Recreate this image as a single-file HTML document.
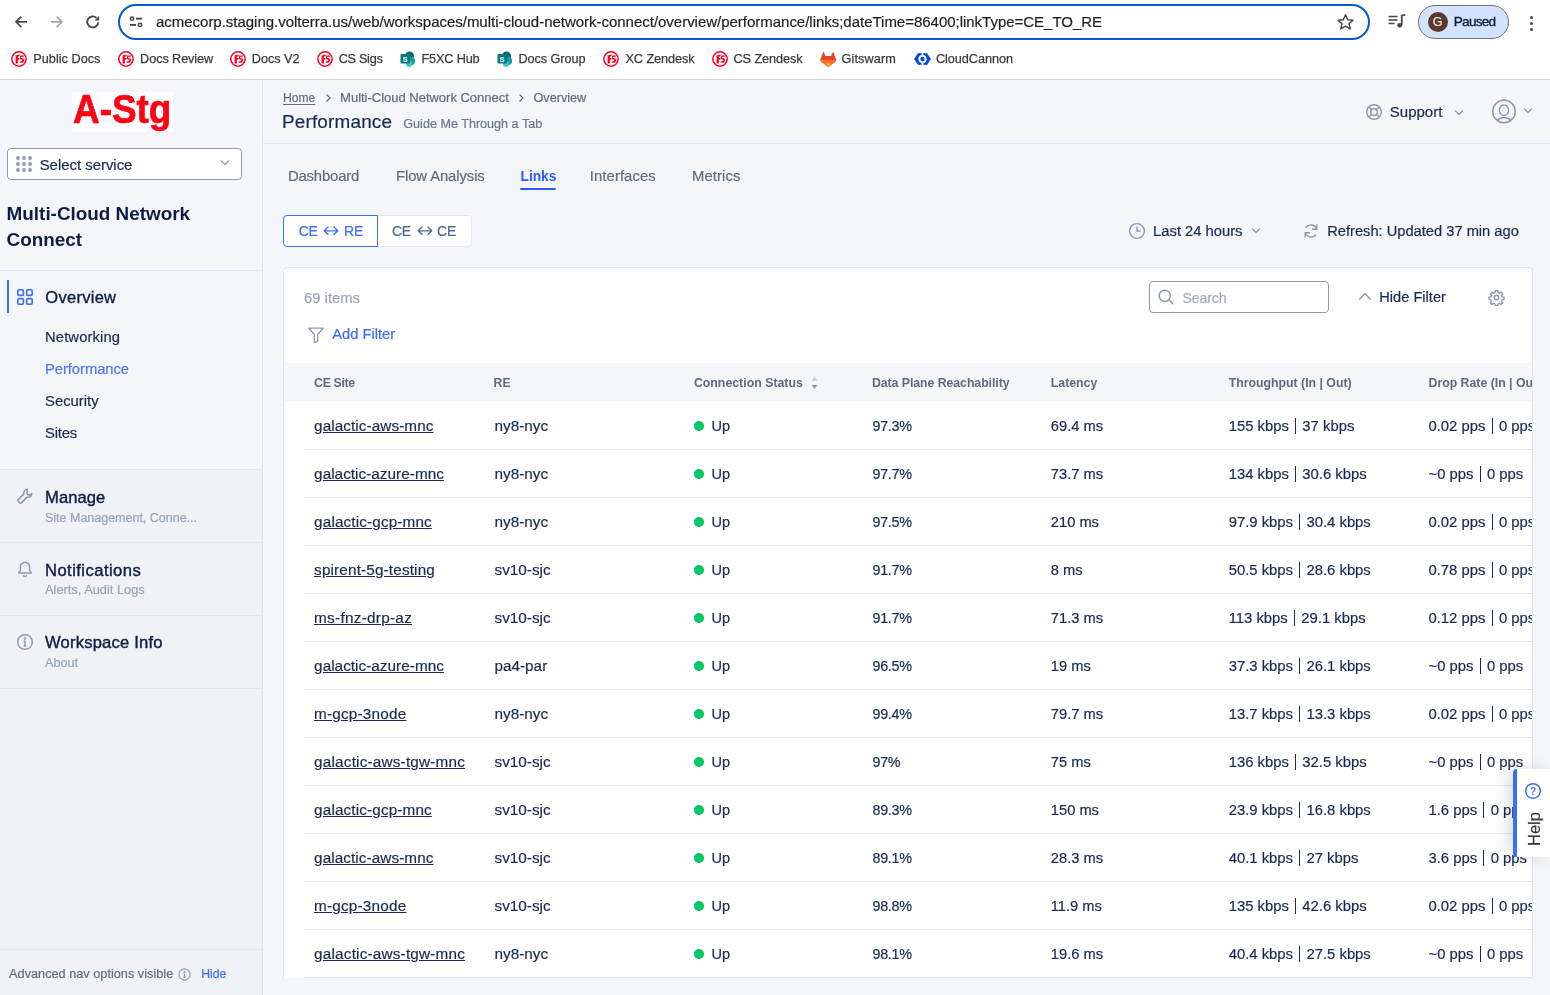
<!DOCTYPE html>
<html><head><meta charset="utf-8"><style>
html,body{margin:0;padding:0;width:1550px;height:995px;overflow:hidden;background:#f5f6f9;font-family:"Liberation Sans",sans-serif;}
body{position:relative;will-change:transform}
div{-webkit-text-stroke:0.2px currentColor}
</style></head><body>
<div style="position:absolute;left:0px;top:0px;width:1550px;height:79px;background:#ffffff"></div>
<div style="position:absolute;left:0px;top:79px;width:1550px;height:1px;background:#d6d9d8"></div>
<div style="position:absolute;left:118px;top:4px;width:1252px;height:36px;box-sizing:border-box;border:2px solid #0b57d0;border-radius:18px;background:#fff"></div>
<div style="position:absolute;left:156.00px;top:12.98px;font-size:15px;line-height:17.25px;white-space:pre;color:#1f1f1f;letter-spacing:-0.021px;">acmecorp.staging.volterra.us/web/workspaces/multi-cloud-network-connect/overview/performance/links;dateTime=86400;linkType=CE_TO_RE</div>
<svg style="position:absolute;left:0;top:0" width="120" height="45" viewBox="0 0 120 45">
<path d="M27 21.8H16.2M21.3 16.6L16 21.8l5.3 5.3" fill="none" stroke="#474747" stroke-width="1.7"/>
<path d="M51 21.8h10.8M56.7 16.6L62 21.8l-5.3 5.3" fill="none" stroke="#a6a6a6" stroke-width="1.7"/>
<path d="M98.2 22.2a5.5 5.5 0 1 1-1.7-4.3" fill="none" stroke="#474747" stroke-width="1.9"/>
<path d="M99.2 15.8v4.6h-4.6z" fill="#474747"/>
</svg>
<svg style="position:absolute;left:126px;top:12px" width="20" height="20" viewBox="0 0 20 20">
<circle cx="6" cy="6.6" r="1.7" fill="none" stroke="#474747" stroke-width="1.5"/><path d="M10 6.6h6.2" stroke="#474747" stroke-width="1.9"/>
<circle cx="14" cy="12.9" r="1.7" fill="none" stroke="#474747" stroke-width="1.5"/><path d="M4 12.9h6" stroke="#474747" stroke-width="1.9"/>
</svg>
<svg style="position:absolute;left:1336px;top:13px" width="19" height="18" viewBox="0 0 19 18">
<path d="M9.5 1.8l2.2 4.9 5.3.5-4 3.5 1.2 5.2-4.7-2.8-4.7 2.8 1.2-5.2-4-3.5 5.3-.5z" fill="none" stroke="#474747" stroke-width="1.5" stroke-linejoin="round"/>
</svg>
<svg style="position:absolute;left:1387px;top:13px" width="20" height="17" viewBox="0 0 20 17">
<path d="M1.5 3.5h9M1.5 7h9M1.5 10.5h6" stroke="#474747" stroke-width="1.6"/>
<path d="M14.8 2.2v9.5" stroke="#474747" stroke-width="1.8"/><path d="M14.8 2.2h3.4" stroke="#474747" stroke-width="1.8"/>
<circle cx="12.7" cy="12.3" r="2.4" fill="#474747"/>
</svg>
<div style="position:absolute;left:1418px;top:5px;width:91px;height:34px;box-sizing:border-box;border:1px solid #6f7378;border-radius:17px;background:#d3e3fd"></div>
<div style="position:absolute;left:1428px;top:12px;width:20px;height:20px;border-radius:50%;background:#5b372c"></div>
<div style="position:absolute;left:1432.80px;top:14.78px;font-size:12.5px;line-height:14.37px;white-space:pre;color:#f2e6e0;">G</div>
<div style="position:absolute;left:1453.80px;top:13.87px;font-size:13.6px;line-height:15.64px;white-space:pre;color:#0a1f3f;letter-spacing:-0.771px;-webkit-text-stroke:0.35px #0a1f3f;">Paused</div>
<div style="position:absolute;left:1529.5px;top:15.5px;width:3.2px;height:3.2px;border-radius:50%;background:#474747"></div>
<div style="position:absolute;left:1529.5px;top:21.5px;width:3.2px;height:3.2px;border-radius:50%;background:#474747"></div>
<div style="position:absolute;left:1529.5px;top:27.5px;width:3.2px;height:3.2px;border-radius:50%;background:#474747"></div>
<div style="position:absolute;left:33.30px;top:52.10px;font-size:12.7px;line-height:14.60px;white-space:pre;color:#3c3c3c;letter-spacing:0.013px;-webkit-text-stroke:0.25px #3c3c3c;">Public Docs</div>
<svg style="position:absolute;left:10.8px;top:51px" width="16" height="16" viewBox="0 0 16 16"><circle cx="8" cy="8" r="7.2" fill="#fff" stroke="#ff0020" stroke-width="1.5"/><path d="M4.6 5.2v7.4h2.3V8.4h1.6V7H6.9V6c0-.6.5-.9 1.1-.8l.5.1.3-1.3c-.4-.2-.9-.3-1.5-.3-1.6 0-2.7.8-2.7 1.5z" fill="#ff0020"/><path d="M9.2 4.4h3.9l-.3 1.4h-2.4l-.2 1.2c1.7-.2 2.9.6 2.9 2.2 0 1.8-1.6 2.9-3.7 2.6L8.6 11.5l.5-1.3c1 .3 2.1 0 2.1-1 0-.8-.9-1.2-2.4-.9z" fill="#ff0020"/></svg>
<div style="position:absolute;left:140.10px;top:52.10px;font-size:12.7px;line-height:14.60px;white-space:pre;color:#3c3c3c;letter-spacing:-0.091px;-webkit-text-stroke:0.25px #3c3c3c;">Docs Review</div>
<svg style="position:absolute;left:118.0px;top:51px" width="16" height="16" viewBox="0 0 16 16"><circle cx="8" cy="8" r="7.2" fill="#fff" stroke="#ff0020" stroke-width="1.5"/><path d="M4.6 5.2v7.4h2.3V8.4h1.6V7H6.9V6c0-.6.5-.9 1.1-.8l.5.1.3-1.3c-.4-.2-.9-.3-1.5-.3-1.6 0-2.7.8-2.7 1.5z" fill="#ff0020"/><path d="M9.2 4.4h3.9l-.3 1.4h-2.4l-.2 1.2c1.7-.2 2.9.6 2.9 2.2 0 1.8-1.6 2.9-3.7 2.6L8.6 11.5l.5-1.3c1 .3 2.1 0 2.1-1 0-.8-.9-1.2-2.4-.9z" fill="#ff0020"/></svg>
<div style="position:absolute;left:251.80px;top:52.10px;font-size:12.7px;line-height:14.60px;white-space:pre;color:#3c3c3c;letter-spacing:-0.042px;-webkit-text-stroke:0.25px #3c3c3c;">Docs V2</div>
<svg style="position:absolute;left:229.8px;top:51px" width="16" height="16" viewBox="0 0 16 16"><circle cx="8" cy="8" r="7.2" fill="#fff" stroke="#ff0020" stroke-width="1.5"/><path d="M4.6 5.2v7.4h2.3V8.4h1.6V7H6.9V6c0-.6.5-.9 1.1-.8l.5.1.3-1.3c-.4-.2-.9-.3-1.5-.3-1.6 0-2.7.8-2.7 1.5z" fill="#ff0020"/><path d="M9.2 4.4h3.9l-.3 1.4h-2.4l-.2 1.2c1.7-.2 2.9.6 2.9 2.2 0 1.8-1.6 2.9-3.7 2.6L8.6 11.5l.5-1.3c1 .3 2.1 0 2.1-1 0-.8-.9-1.2-2.4-.9z" fill="#ff0020"/></svg>
<div style="position:absolute;left:338.70px;top:52.10px;font-size:12.7px;line-height:14.60px;white-space:pre;color:#3c3c3c;letter-spacing:-0.297px;-webkit-text-stroke:0.25px #3c3c3c;">CS Sigs</div>
<svg style="position:absolute;left:316.8px;top:51px" width="16" height="16" viewBox="0 0 16 16"><circle cx="8" cy="8" r="7.2" fill="#fff" stroke="#ff0020" stroke-width="1.5"/><path d="M4.6 5.2v7.4h2.3V8.4h1.6V7H6.9V6c0-.6.5-.9 1.1-.8l.5.1.3-1.3c-.4-.2-.9-.3-1.5-.3-1.6 0-2.7.8-2.7 1.5z" fill="#ff0020"/><path d="M9.2 4.4h3.9l-.3 1.4h-2.4l-.2 1.2c1.7-.2 2.9.6 2.9 2.2 0 1.8-1.6 2.9-3.7 2.6L8.6 11.5l.5-1.3c1 .3 2.1 0 2.1-1 0-.8-.9-1.2-2.4-.9z" fill="#ff0020"/></svg>
<div style="position:absolute;left:421.50px;top:52.10px;font-size:12.7px;line-height:14.60px;white-space:pre;color:#3c3c3c;letter-spacing:-0.161px;-webkit-text-stroke:0.25px #3c3c3c;">F5XC Hub</div>
<svg style="position:absolute;left:400.0px;top:51px" width="16" height="16" viewBox="0 0 16 16"><circle cx="9.5" cy="5" r="4.5" fill="#036c70"/><circle cx="11" cy="10" r="4.2" fill="#1a9ba1"/><circle cx="9" cy="13" r="3" fill="#37c6d0"/><rect x="0.5" y="3" width="9.5" height="9.5" rx="1" fill="#03787c"/><text x="5.2" y="10.8" text-anchor="middle" font-family="Liberation Sans" font-weight="bold" font-size="8" fill="#fff">S</text></svg>
<div style="position:absolute;left:518.50px;top:52.10px;font-size:12.7px;line-height:14.60px;white-space:pre;color:#3c3c3c;letter-spacing:-0.076px;-webkit-text-stroke:0.25px #3c3c3c;">Docs Group</div>
<svg style="position:absolute;left:496.6px;top:51px" width="16" height="16" viewBox="0 0 16 16"><circle cx="9.5" cy="5" r="4.5" fill="#036c70"/><circle cx="11" cy="10" r="4.2" fill="#1a9ba1"/><circle cx="9" cy="13" r="3" fill="#37c6d0"/><rect x="0.5" y="3" width="9.5" height="9.5" rx="1" fill="#03787c"/><text x="5.2" y="10.8" text-anchor="middle" font-family="Liberation Sans" font-weight="bold" font-size="8" fill="#fff">S</text></svg>
<div style="position:absolute;left:625.50px;top:52.10px;font-size:12.7px;line-height:14.60px;white-space:pre;color:#3c3c3c;letter-spacing:-0.088px;-webkit-text-stroke:0.25px #3c3c3c;">XC Zendesk</div>
<svg style="position:absolute;left:603.4px;top:51px" width="16" height="16" viewBox="0 0 16 16"><circle cx="8" cy="8" r="7.2" fill="#fff" stroke="#ff0020" stroke-width="1.5"/><path d="M4.6 5.2v7.4h2.3V8.4h1.6V7H6.9V6c0-.6.5-.9 1.1-.8l.5.1.3-1.3c-.4-.2-.9-.3-1.5-.3-1.6 0-2.7.8-2.7 1.5z" fill="#ff0020"/><path d="M9.2 4.4h3.9l-.3 1.4h-2.4l-.2 1.2c1.7-.2 2.9.6 2.9 2.2 0 1.8-1.6 2.9-3.7 2.6L8.6 11.5l.5-1.3c1 .3 2.1 0 2.1-1 0-.8-.9-1.2-2.4-.9z" fill="#ff0020"/></svg>
<div style="position:absolute;left:733.50px;top:52.10px;font-size:12.7px;line-height:14.60px;white-space:pre;color:#3c3c3c;letter-spacing:-0.088px;-webkit-text-stroke:0.25px #3c3c3c;">CS Zendesk</div>
<svg style="position:absolute;left:711.5px;top:51px" width="16" height="16" viewBox="0 0 16 16"><circle cx="8" cy="8" r="7.2" fill="#fff" stroke="#ff0020" stroke-width="1.5"/><path d="M4.6 5.2v7.4h2.3V8.4h1.6V7H6.9V6c0-.6.5-.9 1.1-.8l.5.1.3-1.3c-.4-.2-.9-.3-1.5-.3-1.6 0-2.7.8-2.7 1.5z" fill="#ff0020"/><path d="M9.2 4.4h3.9l-.3 1.4h-2.4l-.2 1.2c1.7-.2 2.9.6 2.9 2.2 0 1.8-1.6 2.9-3.7 2.6L8.6 11.5l.5-1.3c1 .3 2.1 0 2.1-1 0-.8-.9-1.2-2.4-.9z" fill="#ff0020"/></svg>
<div style="position:absolute;left:841.50px;top:52.10px;font-size:12.7px;line-height:14.60px;white-space:pre;color:#3c3c3c;letter-spacing:0.122px;-webkit-text-stroke:0.25px #3c3c3c;">Gitswarm</div>
<svg style="position:absolute;left:820.0px;top:51px" width="17" height="16" viewBox="0 0 17 16"><path d="M3.4 0.6L5.4 5H11.1L13.1 0.6L16 8.3Q16.4 9.7 15.2 10.7L8.25 15.9L1.3 10.7Q0.1 9.7 0.5 8.3Z" fill="#e2432a"/><path d="M0.45 8.9H16.05L15.2 10.7L8.25 15.9L1.3 10.7Z" fill="#fc6d26"/><path d="M5.6 12.6H10.9L8.25 15.9Z" fill="#fca326"/></svg>
<div style="position:absolute;left:935.90px;top:52.10px;font-size:12.7px;line-height:14.60px;white-space:pre;color:#3c3c3c;letter-spacing:-0.043px;-webkit-text-stroke:0.25px #3c3c3c;">CloudCannon</div>
<svg style="position:absolute;left:913.6px;top:53px" width="17" height="12" viewBox="0 0 17 12"><path d="M4.2 0.2H12.8L16.6 6L12.8 11.8H4.2L0.4 6Z" fill="#034ad8" stroke="#034ad8" stroke-width="0.6" stroke-linejoin="round"/><circle cx="8.5" cy="6" r="4.1" fill="#fff"/><circle cx="8.5" cy="6" r="2.2" fill="#034ad8"/><rect x="7.6" y="0" width="1.8" height="2.2" fill="#fff"/><rect x="7.6" y="9.8" width="1.8" height="2.2" fill="#fff"/></svg>
<div style="position:absolute;left:0px;top:80px;width:262px;height:389px;background:#f5f6f9"></div>
<div style="position:absolute;left:0px;top:469px;width:262px;height:526px;background:#f0f2f7"></div>
<div style="position:absolute;left:262px;top:80px;width:1px;height:915px;background:#e2e6ef"></div>
<div style="position:absolute;left:0px;top:270px;width:262px;height:1px;background:#e2e6ef"></div>
<div style="position:absolute;left:0px;top:469px;width:262px;height:1px;background:#e2e6ef"></div>
<div style="position:absolute;left:0px;top:542px;width:262px;height:1px;background:#e2e6ef"></div>
<div style="position:absolute;left:0px;top:615px;width:262px;height:1px;background:#e2e6ef"></div>
<div style="position:absolute;left:0px;top:688px;width:262px;height:1px;background:#e2e6ef"></div>
<div style="position:absolute;left:0px;top:949px;width:262px;height:1px;background:#e2e6ef"></div>
<div style="position:absolute;left:72px;top:92px;width:101px;height:40px;background:#fff"></div>
<div style="position:absolute;left:72.50px;top:86.42px;font-size:41px;line-height:47.15px;white-space:pre;color:#ff0014;font-weight:bold;-webkit-text-stroke:0;transform-origin:0 0;transform:scaleX(0.90);-webkit-text-stroke:0.7px #ff0014;">A-Stg</div>
<div style="position:absolute;left:7px;top:148px;width:235px;height:32px;box-sizing:border-box;border:1px solid #8f9ab0;border-radius:4px;background:#fff"></div>
<div style="position:absolute;left:16px;top:156px;width:4px;height:4px;border-radius:50%;background:#929db0"></div>
<div style="position:absolute;left:16px;top:162px;width:4px;height:4px;border-radius:50%;background:#929db0"></div>
<div style="position:absolute;left:16px;top:168px;width:4px;height:4px;border-radius:50%;background:#929db0"></div>
<div style="position:absolute;left:22px;top:156px;width:4px;height:4px;border-radius:50%;background:#929db0"></div>
<div style="position:absolute;left:22px;top:162px;width:4px;height:4px;border-radius:50%;background:#929db0"></div>
<div style="position:absolute;left:22px;top:168px;width:4px;height:4px;border-radius:50%;background:#929db0"></div>
<div style="position:absolute;left:28px;top:156px;width:4px;height:4px;border-radius:50%;background:#929db0"></div>
<div style="position:absolute;left:28px;top:162px;width:4px;height:4px;border-radius:50%;background:#929db0"></div>
<div style="position:absolute;left:28px;top:168px;width:4px;height:4px;border-radius:50%;background:#929db0"></div>
<div style="position:absolute;left:39.70px;top:157.27px;font-size:14.9px;line-height:17.13px;white-space:pre;color:#1b2a4e;">Select service</div>
<svg style="position:absolute;left:220px;top:159px" width="10" height="8" viewBox="0 0 10 8"><path d="M1 1.5l4 4 4-4" fill="none" stroke="#8f9ab0" stroke-width="1.3"/></svg>
<div style="position:absolute;left:6.60px;top:202.88px;font-size:18.9px;line-height:21.73px;white-space:pre;color:#0f1d45;font-weight:bold;-webkit-text-stroke:0;letter-spacing:-0.007px;">Multi-Cloud Network</div>
<div style="position:absolute;left:6.60px;top:229.38px;font-size:18.9px;line-height:21.73px;white-space:pre;color:#0f1d45;font-weight:bold;-webkit-text-stroke:0;">Connect</div>
<div style="position:absolute;left:7px;top:280px;width:2px;height:33px;background:#3b6ef0"></div>
<svg style="position:absolute;left:16px;top:288px" width="18" height="18" viewBox="0 0 18 18" fill="none" stroke="#3b6ef0" stroke-width="1.6"><rect x="1.8" y="1.8" width="5.6" height="5.6" rx="1.2"/><rect x="10.6" y="1.8" width="5.6" height="5.6" rx="1.2"/><rect x="1.8" y="10.6" width="5.6" height="5.6" rx="1.2"/><rect x="10.6" y="10.6" width="5.6" height="5.6" rx="1.2"/></svg>
<div style="position:absolute;left:45.30px;top:287.70px;font-size:16.5px;line-height:18.97px;white-space:pre;color:#0f1d45;letter-spacing:0.280px;-webkit-text-stroke:0.35px #0f1d45;">Overview</div>
<div style="position:absolute;left:45.00px;top:329.26px;font-size:14.8px;line-height:17.02px;white-space:pre;color:#1b2a4e;letter-spacing:0.107px;">Networking</div>
<div style="position:absolute;left:45.00px;top:360.96px;font-size:14.8px;line-height:17.02px;white-space:pre;color:#4a78f5;letter-spacing:-0.066px;">Performance</div>
<div style="position:absolute;left:45.00px;top:393.26px;font-size:14.8px;line-height:17.02px;white-space:pre;color:#1b2a4e;letter-spacing:0.030px;">Security</div>
<div style="position:absolute;left:45.00px;top:424.96px;font-size:14.8px;line-height:17.02px;white-space:pre;color:#1b2a4e;letter-spacing:-0.201px;">Sites</div>
<div style="position:absolute;left:45.00px;top:487.80px;font-size:16.6px;line-height:19.09px;white-space:pre;color:#0f1d45;letter-spacing:0.068px;-webkit-text-stroke:0.4px #0f1d45;">Manage</div>
<div style="position:absolute;left:45.00px;top:510.58px;font-size:12.5px;line-height:14.37px;white-space:pre;color:#9aa4b6;letter-spacing:-0.007px;">Site Management, Conne...</div>
<div style="position:absolute;left:45.00px;top:560.60px;font-size:16.6px;line-height:19.09px;white-space:pre;color:#0f1d45;letter-spacing:0.445px;-webkit-text-stroke:0.4px #0f1d45;">Notifications</div>
<div style="position:absolute;left:45.00px;top:583.10px;font-size:12.8px;line-height:14.72px;white-space:pre;color:#9aa4b6;letter-spacing:0.005px;">Alerts, Audit Logs</div>
<div style="position:absolute;left:45.00px;top:633.40px;font-size:16.6px;line-height:19.09px;white-space:pre;color:#0f1d45;letter-spacing:0.191px;-webkit-text-stroke:0.4px #0f1d45;">Workspace Info</div>
<div style="position:absolute;left:45.00px;top:656.19px;font-size:12.6px;line-height:14.49px;white-space:pre;color:#9aa4b6;letter-spacing:0.014px;">About</div>
<svg style="position:absolute;left:16px;top:487px" width="18" height="18" viewBox="0 0 18 18" fill="none" stroke="#8f9ab0" stroke-width="1.55" stroke-linejoin="round"><path d="M11.5 2.2a3.6 3.6 0 0 0-3.6 4.7L2.4 12.4a1.5 1.5 0 0 0 0 2.1l1.1 1.1a1.5 1.5 0 0 0 2.1 0l5.5-5.5a3.6 3.6 0 0 0 4.7-3.6l-2.2 1.6-2.2-.5-.5-2.2z"/></svg>
<svg style="position:absolute;left:16px;top:560px" width="18" height="18" viewBox="0 0 18 18" fill="none" stroke="#8f9ab0" stroke-width="1.5" stroke-linejoin="round"><path d="M9 2.3a4.6 4.6 0 0 0-4.6 4.6v3.5L2.6 13h12.8l-1.8-2.6V6.9A4.6 4.6 0 0 0 9 2.3z"/><path d="M7.2 15.3a1.9 1.9 0 0 0 3.6 0"/></svg>
<svg style="position:absolute;left:16px;top:633px" width="18" height="18" viewBox="0 0 18 18" fill="none" stroke="#8f9ab0" stroke-width="1.5"><circle cx="9" cy="9" r="7.3"/><path d="M9 8v5M7.6 13h2.8M7.8 8H9"/><circle cx="9" cy="5.5" r="0.6" fill="#8f9ab0"/></svg>
<div style="position:absolute;left:9.10px;top:967.00px;font-size:12.7px;line-height:14.60px;white-space:pre;color:#606c80;letter-spacing:0.018px;">Advanced nav options visible</div>
<svg style="position:absolute;left:178px;top:967.5px" width="13" height="13" viewBox="0 0 13 13" fill="none" stroke="#8f9ab0" stroke-width="1.1"><circle cx="6.5" cy="6.5" r="5.6"/><path d="M6.5 5.6v3.8M5.3 9.4h2.4M5.5 5.6h1"/><circle cx="6.5" cy="3.8" r="0.5" fill="#8f9ab0"/></svg>
<div style="position:absolute;left:201.20px;top:967.46px;font-size:12.2px;line-height:14.03px;white-space:pre;color:#3b6ef0;letter-spacing:-0.023px;">Hide</div>
<div style="position:absolute;left:263px;top:80px;width:1287px;height:915px;background:#f5f6f9"></div>
<div style="position:absolute;left:263px;top:143px;width:1287px;height:1px;background:#e2e6ef"></div>
<div style="position:absolute;left:283.00px;top:91.85px;font-size:12.1px;line-height:13.91px;white-space:pre;color:#606c80;letter-spacing:-0.019px;text-decoration:underline;text-underline-offset:2px;text-decoration-thickness:1px;">Home</div>
<svg style="position:absolute;left:324px;top:93px" width="9" height="10" viewBox="0 0 9 10"><path d="M2.5 1.5l3.5 3.5-3.5 3.5" fill="none" stroke="#606c80" stroke-width="1.1"/></svg>
<div style="position:absolute;left:340.10px;top:91.02px;font-size:13px;line-height:14.95px;white-space:pre;color:#606c80;letter-spacing:-0.013px;">Multi-Cloud Network Connect</div>
<svg style="position:absolute;left:517px;top:93px" width="9" height="10" viewBox="0 0 9 10"><path d="M2.5 1.5l3.5 3.5-3.5 3.5" fill="none" stroke="#606c80" stroke-width="1.1"/></svg>
<div style="position:absolute;left:533.50px;top:91.34px;font-size:12.65px;line-height:14.55px;white-space:pre;color:#606c80;letter-spacing:-0.002px;">Overview</div>
<div style="position:absolute;left:282.00px;top:110.58px;font-size:18.9px;line-height:21.73px;white-space:pre;color:#1b2a4e;letter-spacing:0.182px;">Performance</div>
<div style="position:absolute;left:403.30px;top:117.19px;font-size:12.6px;line-height:14.49px;white-space:pre;color:#6b7891;letter-spacing:0.003px;">Guide Me Through a Tab</div>
<svg style="position:absolute;left:1365px;top:103px" width="18" height="18" viewBox="0 0 18 18" fill="none" stroke="#8f9ab0" stroke-width="1.4"><circle cx="9" cy="9" r="7.3"/><circle cx="9" cy="9" r="3.3"/><path d="M3.9 3.9l2.8 2.8M14.1 3.9l-2.8 2.8M3.9 14.1l2.8-2.8M14.1 14.1l-2.8-2.8"/></svg>
<div style="position:absolute;left:1389.80px;top:103.18px;font-size:15px;line-height:17.25px;white-space:pre;color:#1b2a4e;letter-spacing:0.009px;">Support</div>
<svg style="position:absolute;left:1454px;top:109px" width="10" height="8" viewBox="0 0 10 8"><path d="M1 1.5l4 4 4-4" fill="none" stroke="#8f9ab0" stroke-width="1.3"/></svg>
<svg style="position:absolute;left:1491px;top:99px" width="26" height="26" viewBox="0 0 26 26" fill="none" stroke="#8f9ab0" stroke-width="1.5"><circle cx="13" cy="12.4" r="11.3"/><ellipse cx="13" cy="11.2" rx="4.6" ry="5.2"/><path d="M6.4 21.2c1.8-2 4-2.8 6.6-2.8s4.8.8 6.6 2.8"/></svg>
<svg style="position:absolute;left:1523px;top:107px" width="10" height="8" viewBox="0 0 10 8"><path d="M1 1.5l4 4 4-4" fill="none" stroke="#8f9ab0" stroke-width="1.3"/></svg>
<div style="position:absolute;left:287.90px;top:167.66px;font-size:14.8px;line-height:17.02px;white-space:pre;color:#606c80;letter-spacing:-0.123px;">Dashboard</div>
<div style="position:absolute;left:396.00px;top:167.66px;font-size:14.8px;line-height:17.02px;white-space:pre;color:#606c80;letter-spacing:-0.073px;">Flow Analysis</div>
<div style="position:absolute;left:589.80px;top:167.66px;font-size:14.8px;line-height:17.02px;white-space:pre;color:#606c80;letter-spacing:0.101px;">Interfaces</div>
<div style="position:absolute;left:692.10px;top:167.66px;font-size:14.8px;line-height:17.02px;white-space:pre;color:#606c80;letter-spacing:0.102px;">Metrics</div>
<div style="position:absolute;left:520.50px;top:168.58px;font-size:13.8px;line-height:15.87px;white-space:pre;color:#2a5cf0;font-weight:bold;-webkit-text-stroke:0;letter-spacing:-0.049px;">Links</div>
<div style="position:absolute;left:520px;top:188px;width:36px;height:2px;background:#2a5cf0;border-radius:1px"></div>
<div style="position:absolute;left:283px;top:215px;width:189px;height:32px;box-sizing:border-box;border:1px solid #e2e6ef;border-radius:4px;background:#fff"></div>
<div style="position:absolute;left:283px;top:215px;width:95px;height:32px;box-sizing:border-box;border:1px solid #3b6ef0;border-radius:4px 0 0 4px;background:#fff"></div>
<div style="position:absolute;left:298.70px;top:223.30px;font-size:14px;line-height:16.10px;white-space:pre;color:#3b6ef0;letter-spacing:-0.3px;">CE</div>
<div style="position:absolute;left:344.10px;top:223.30px;font-size:14px;line-height:16.10px;white-space:pre;color:#3b6ef0;letter-spacing:-0.3px;">RE</div>
<div style="position:absolute;left:392.00px;top:223.30px;font-size:14px;line-height:16.10px;white-space:pre;color:#5b6780;letter-spacing:-0.3px;">CE</div>
<div style="position:absolute;left:437.10px;top:223.30px;font-size:14px;line-height:16.10px;white-space:pre;color:#5b6780;letter-spacing:-0.3px;">CE</div>
<svg style="position:absolute;left:323px;top:225px" width="16" height="12" viewBox="0 0 16 12" fill="none" stroke="#3b6ef0" stroke-width="1.35" stroke-linecap="round" stroke-linejoin="round"><path d="M1.2 5.8h13.6M5 2L1.2 5.8 5 9.6M11 2l3.8 3.8L11 9.6"/></svg>
<svg style="position:absolute;left:416.5px;top:225px" width="16" height="12" viewBox="0 0 16 12" fill="none" stroke="#5b6780" stroke-width="1.35" stroke-linecap="round" stroke-linejoin="round"><path d="M1.2 5.8h13.6M5 2L1.2 5.8 5 9.6M11 2l3.8 3.8L11 9.6"/></svg>
<svg style="position:absolute;left:1128px;top:222px" width="18" height="18" viewBox="0 0 18 18" fill="none" stroke="#8f9ab0" stroke-width="1.4"><circle cx="9" cy="9" r="7.4"/><path d="M9 4.6V9h3.6"/></svg>
<div style="position:absolute;left:1153.10px;top:222.91px;font-size:14.75px;line-height:16.96px;white-space:pre;color:#1b2a4e;letter-spacing:0.002px;">Last 24 hours</div>
<svg style="position:absolute;left:1251px;top:227px" width="10" height="8" viewBox="0 0 10 8"><path d="M1 1.5l4 4 4-4" fill="none" stroke="#8f9ab0" stroke-width="1.3"/></svg>
<svg style="position:absolute;left:1302px;top:222px" width="18" height="18" viewBox="0 0 18 18" fill="none" stroke="#8f9ab0" stroke-width="1.4"><path d="M14.5 7.3A5.8 5.8 0 0 0 4 5.5M3.5 10.7A5.8 5.8 0 0 0 14 12.5"/><path d="M14.8 2.5v4.8H10M3.2 15.5v-4.8H8"/></svg>
<div style="position:absolute;left:1327.20px;top:222.95px;font-size:14.7px;line-height:16.90px;white-space:pre;color:#1b2a4e;letter-spacing:-0.009px;">Refresh: Updated 37 min ago</div>
<div style="position:absolute;left:283px;top:267px;width:1250px;height:711px;box-sizing:border-box;border:1px solid #e2e6ef;border-bottom:none;border-radius:4px 4px 0 0;background:#fff;overflow:hidden">
</div>
<div style="position:absolute;left:304.00px;top:289.96px;font-size:14.8px;line-height:17.02px;white-space:pre;color:#9aa4b6;letter-spacing:0.008px;">69 items</div>
<div style="position:absolute;left:1149px;top:281px;width:180px;height:32px;box-sizing:border-box;border:1px solid #8f9ab0;border-radius:4px;background:#fff"></div>
<svg style="position:absolute;left:1157px;top:288px" width="18" height="18" viewBox="0 0 18 18" fill="none" stroke="#8f9ab0" stroke-width="1.5"><circle cx="7.8" cy="7.8" r="5.6"/><path d="M11.8 11.8l4.4 4.4"/></svg>
<div style="position:absolute;left:1182.50px;top:290.11px;font-size:14.2px;line-height:16.33px;white-space:pre;color:#a3adbf;letter-spacing:-0.165px;">Search</div>
<svg style="position:absolute;left:1358px;top:291px" width="14" height="10" viewBox="0 0 14 10"><path d="M1.3 8.5L7 2.5l5.7 6" fill="none" stroke="#8f9ab0" stroke-width="1.4"/></svg>
<div style="position:absolute;left:1379.30px;top:288.55px;font-size:14.6px;line-height:16.79px;white-space:pre;color:#1b2a4e;letter-spacing:0.007px;">Hide Filter</div>
<svg style="position:absolute;left:1487.5px;top:288.5px" width="17" height="17" viewBox="0 0 24 24" fill="none" stroke="#8f9ab0" stroke-width="2"><circle cx="12" cy="12" r="3.2"/><path d="M10.3 2.5h3.4l.5 2.6 1.9.8 2.2-1.5 2.4 2.4-1.5 2.2.8 1.9 2.6.5v3.4l-2.6.5-.8 1.9 1.5 2.2-2.4 2.4-2.2-1.5-1.9.8-.5 2.6h-3.4l-.5-2.6-1.9-.8-2.2 1.5-2.4-2.4 1.5-2.2-.8-1.9-2.6-.5v-3.4l2.6-.5.8-1.9-1.5-2.2 2.4-2.4 2.2 1.5 1.9-.8z" stroke-linejoin="round"/></svg>
<svg style="position:absolute;left:307px;top:326px" width="18" height="18" viewBox="0 0 18 18" fill="none" stroke="#8f9ab0" stroke-width="1.3" stroke-linejoin="round"><path d="M1.8 2.2h14.4l-5.5 6.3v6.6l-3.4 1.6V8.5z"/></svg>
<div style="position:absolute;left:332.20px;top:326.35px;font-size:14.7px;line-height:16.90px;white-space:pre;color:#3b6ef0;letter-spacing:0.009px;">Add Filter</div>
<div style="position:absolute;left:284px;top:363px;width:1248px;height:38px;background:#f5f6f9"></div>
<div style="position:absolute;left:314.10px;top:375.67px;font-size:12.3px;line-height:14.14px;white-space:pre;color:#5e6a7f;font-weight:bold;-webkit-text-stroke:0;letter-spacing:-0.323px;">CE Site</div>
<div style="position:absolute;left:493.50px;top:375.67px;font-size:12.3px;line-height:14.14px;white-space:pre;color:#5e6a7f;font-weight:bold;-webkit-text-stroke:0;">RE</div>
<div style="position:absolute;left:693.90px;top:375.67px;font-size:12.3px;line-height:14.14px;white-space:pre;color:#5e6a7f;font-weight:bold;-webkit-text-stroke:0;letter-spacing:0.020px;">Connection Status</div>
<div style="position:absolute;left:871.90px;top:375.67px;font-size:12.3px;line-height:14.14px;white-space:pre;color:#5e6a7f;font-weight:bold;-webkit-text-stroke:0;letter-spacing:-0.047px;">Data Plane Reachability</div>
<div style="position:absolute;left:1050.80px;top:375.67px;font-size:12.3px;line-height:14.14px;white-space:pre;color:#5e6a7f;font-weight:bold;-webkit-text-stroke:0;">Latency</div>
<div style="position:absolute;left:1228.70px;top:375.67px;font-size:12.3px;line-height:14.14px;white-space:pre;color:#5e6a7f;font-weight:bold;-webkit-text-stroke:0;">Throughput (In | Out)</div>
<div style="position:absolute;left:1428.50px;top:375.67px;font-size:12.3px;line-height:14.14px;white-space:pre;color:#5e6a7f;font-weight:bold;-webkit-text-stroke:0;">Drop Rate (In | Out)</div>
<svg style="position:absolute;left:809px;top:376px" width="10" height="14" viewBox="0 0 10 14"><path d="M5.5 0.6L8.3 4.8H2.7z" fill="#c5ccdb"/><path d="M5.5 13L8.3 8.9H2.7z" fill="#8a96aa"/></svg>
<div style="position:absolute;left:314.10px;top:417.20px;font-size:15.3px;line-height:17.59px;white-space:pre;color:#1b2a4e;letter-spacing:0.076px;text-decoration:underline;text-underline-offset:1px;">galactic-aws-mnc</div>
<div style="position:absolute;left:494.50px;top:417.20px;font-size:15.3px;line-height:17.59px;white-space:pre;color:#1b2a4e;">ny8-nyc</div>
<div style="position:absolute;left:694px;top:420.8px;width:10px;height:10px;border-radius:50%;background:#00c864"></div>
<div style="position:absolute;left:711.50px;top:417.94px;font-size:14.5px;line-height:16.67px;white-space:pre;color:#1b2a4e;">Up</div>
<div style="position:absolute;left:872.50px;top:418.12px;font-size:14.3px;line-height:16.45px;white-space:pre;color:#1b2a4e;letter-spacing:-0.3px;">97.3%</div>
<div style="position:absolute;left:1050.80px;top:417.75px;font-size:14.7px;line-height:16.90px;white-space:pre;color:#1b2a4e;">69.4 ms</div>
<div style="position:absolute;left:1228.70px;top:417.62px;font-size:14.84px;line-height:17.07px;white-space:pre;color:#1b2a4e;">155 kbps<span style="display:inline-block;width:1px;height:16.6px;background:#1b2a4e;vertical-align:-3.2px;margin:0 6.2px 0 6.3px"></span>37 kbps</div>
<div style="position:absolute;left:1428.50px;top:417.62px;font-size:14.84px;line-height:17.07px;white-space:pre;color:#1b2a4e;">0.02 pps<span style="display:inline-block;width:1px;height:16.6px;background:#1b2a4e;vertical-align:-3.2px;margin:0 6.2px 0 6.3px"></span>0 pps</div>
<div style="position:absolute;left:304px;top:449px;width:1228px;height:1px;background:#e2e6ef"></div>
<div style="position:absolute;left:314.10px;top:465.20px;font-size:15.3px;line-height:17.59px;white-space:pre;color:#1b2a4e;letter-spacing:0.031px;text-decoration:underline;text-underline-offset:1px;">galactic-azure-mnc</div>
<div style="position:absolute;left:494.50px;top:465.20px;font-size:15.3px;line-height:17.59px;white-space:pre;color:#1b2a4e;">ny8-nyc</div>
<div style="position:absolute;left:694px;top:468.8px;width:10px;height:10px;border-radius:50%;background:#00c864"></div>
<div style="position:absolute;left:711.50px;top:465.94px;font-size:14.5px;line-height:16.67px;white-space:pre;color:#1b2a4e;">Up</div>
<div style="position:absolute;left:872.50px;top:466.12px;font-size:14.3px;line-height:16.45px;white-space:pre;color:#1b2a4e;letter-spacing:-0.3px;">97.7%</div>
<div style="position:absolute;left:1050.80px;top:465.75px;font-size:14.7px;line-height:16.90px;white-space:pre;color:#1b2a4e;">73.7 ms</div>
<div style="position:absolute;left:1228.70px;top:465.62px;font-size:14.84px;line-height:17.07px;white-space:pre;color:#1b2a4e;">134 kbps<span style="display:inline-block;width:1px;height:16.6px;background:#1b2a4e;vertical-align:-3.2px;margin:0 6.2px 0 6.3px"></span>30.6 kbps</div>
<div style="position:absolute;left:1428.50px;top:465.62px;font-size:14.84px;line-height:17.07px;white-space:pre;color:#1b2a4e;">~0 pps<span style="display:inline-block;width:1px;height:16.6px;background:#1b2a4e;vertical-align:-3.2px;margin:0 6.2px 0 6.3px"></span>0 pps</div>
<div style="position:absolute;left:304px;top:497px;width:1228px;height:1px;background:#e2e6ef"></div>
<div style="position:absolute;left:314.10px;top:513.20px;font-size:15.3px;line-height:17.59px;white-space:pre;color:#1b2a4e;letter-spacing:0.135px;text-decoration:underline;text-underline-offset:1px;">galactic-gcp-mnc</div>
<div style="position:absolute;left:494.50px;top:513.20px;font-size:15.3px;line-height:17.59px;white-space:pre;color:#1b2a4e;">ny8-nyc</div>
<div style="position:absolute;left:694px;top:516.8px;width:10px;height:10px;border-radius:50%;background:#00c864"></div>
<div style="position:absolute;left:711.50px;top:513.94px;font-size:14.5px;line-height:16.67px;white-space:pre;color:#1b2a4e;">Up</div>
<div style="position:absolute;left:872.50px;top:514.12px;font-size:14.3px;line-height:16.45px;white-space:pre;color:#1b2a4e;letter-spacing:-0.3px;">97.5%</div>
<div style="position:absolute;left:1050.80px;top:513.75px;font-size:14.7px;line-height:16.90px;white-space:pre;color:#1b2a4e;">210 ms</div>
<div style="position:absolute;left:1228.70px;top:513.62px;font-size:14.84px;line-height:17.07px;white-space:pre;color:#1b2a4e;">97.9 kbps<span style="display:inline-block;width:1px;height:16.6px;background:#1b2a4e;vertical-align:-3.2px;margin:0 6.2px 0 6.3px"></span>30.4 kbps</div>
<div style="position:absolute;left:1428.50px;top:513.62px;font-size:14.84px;line-height:17.07px;white-space:pre;color:#1b2a4e;">0.02 pps<span style="display:inline-block;width:1px;height:16.6px;background:#1b2a4e;vertical-align:-3.2px;margin:0 6.2px 0 6.3px"></span>0 pps</div>
<div style="position:absolute;left:304px;top:545px;width:1228px;height:1px;background:#e2e6ef"></div>
<div style="position:absolute;left:314.10px;top:561.20px;font-size:15.3px;line-height:17.59px;white-space:pre;color:#1b2a4e;letter-spacing:0.149px;text-decoration:underline;text-underline-offset:1px;">spirent-5g-testing</div>
<div style="position:absolute;left:494.50px;top:561.20px;font-size:15.3px;line-height:17.59px;white-space:pre;color:#1b2a4e;">sv10-sjc</div>
<div style="position:absolute;left:694px;top:564.8px;width:10px;height:10px;border-radius:50%;background:#00c864"></div>
<div style="position:absolute;left:711.50px;top:561.94px;font-size:14.5px;line-height:16.67px;white-space:pre;color:#1b2a4e;">Up</div>
<div style="position:absolute;left:872.50px;top:562.12px;font-size:14.3px;line-height:16.45px;white-space:pre;color:#1b2a4e;letter-spacing:-0.3px;">91.7%</div>
<div style="position:absolute;left:1050.80px;top:561.75px;font-size:14.7px;line-height:16.90px;white-space:pre;color:#1b2a4e;">8 ms</div>
<div style="position:absolute;left:1228.70px;top:561.62px;font-size:14.84px;line-height:17.07px;white-space:pre;color:#1b2a4e;">50.5 kbps<span style="display:inline-block;width:1px;height:16.6px;background:#1b2a4e;vertical-align:-3.2px;margin:0 6.2px 0 6.3px"></span>28.6 kbps</div>
<div style="position:absolute;left:1428.50px;top:561.62px;font-size:14.84px;line-height:17.07px;white-space:pre;color:#1b2a4e;">0.78 pps<span style="display:inline-block;width:1px;height:16.6px;background:#1b2a4e;vertical-align:-3.2px;margin:0 6.2px 0 6.3px"></span>0 pps</div>
<div style="position:absolute;left:304px;top:593px;width:1228px;height:1px;background:#e2e6ef"></div>
<div style="position:absolute;left:314.10px;top:609.20px;font-size:15.3px;line-height:17.59px;white-space:pre;color:#1b2a4e;letter-spacing:0.280px;text-decoration:underline;text-underline-offset:1px;">ms-fnz-drp-az</div>
<div style="position:absolute;left:494.50px;top:609.20px;font-size:15.3px;line-height:17.59px;white-space:pre;color:#1b2a4e;">sv10-sjc</div>
<div style="position:absolute;left:694px;top:612.8px;width:10px;height:10px;border-radius:50%;background:#00c864"></div>
<div style="position:absolute;left:711.50px;top:609.94px;font-size:14.5px;line-height:16.67px;white-space:pre;color:#1b2a4e;">Up</div>
<div style="position:absolute;left:872.50px;top:610.12px;font-size:14.3px;line-height:16.45px;white-space:pre;color:#1b2a4e;letter-spacing:-0.3px;">91.7%</div>
<div style="position:absolute;left:1050.80px;top:609.75px;font-size:14.7px;line-height:16.90px;white-space:pre;color:#1b2a4e;">71.3 ms</div>
<div style="position:absolute;left:1228.70px;top:609.62px;font-size:14.84px;line-height:17.07px;white-space:pre;color:#1b2a4e;">113 kbps<span style="display:inline-block;width:1px;height:16.6px;background:#1b2a4e;vertical-align:-3.2px;margin:0 6.2px 0 6.3px"></span>29.1 kbps</div>
<div style="position:absolute;left:1428.50px;top:609.62px;font-size:14.84px;line-height:17.07px;white-space:pre;color:#1b2a4e;">0.12 pps<span style="display:inline-block;width:1px;height:16.6px;background:#1b2a4e;vertical-align:-3.2px;margin:0 6.2px 0 6.3px"></span>0 pps</div>
<div style="position:absolute;left:304px;top:641px;width:1228px;height:1px;background:#e2e6ef"></div>
<div style="position:absolute;left:314.10px;top:657.20px;font-size:15.3px;line-height:17.59px;white-space:pre;color:#1b2a4e;letter-spacing:0.031px;text-decoration:underline;text-underline-offset:1px;">galactic-azure-mnc</div>
<div style="position:absolute;left:494.50px;top:657.20px;font-size:15.3px;line-height:17.59px;white-space:pre;color:#1b2a4e;">pa4-par</div>
<div style="position:absolute;left:694px;top:660.8px;width:10px;height:10px;border-radius:50%;background:#00c864"></div>
<div style="position:absolute;left:711.50px;top:657.94px;font-size:14.5px;line-height:16.67px;white-space:pre;color:#1b2a4e;">Up</div>
<div style="position:absolute;left:872.50px;top:658.12px;font-size:14.3px;line-height:16.45px;white-space:pre;color:#1b2a4e;letter-spacing:-0.3px;">96.5%</div>
<div style="position:absolute;left:1050.80px;top:657.75px;font-size:14.7px;line-height:16.90px;white-space:pre;color:#1b2a4e;">19 ms</div>
<div style="position:absolute;left:1228.70px;top:657.62px;font-size:14.84px;line-height:17.07px;white-space:pre;color:#1b2a4e;">37.3 kbps<span style="display:inline-block;width:1px;height:16.6px;background:#1b2a4e;vertical-align:-3.2px;margin:0 6.2px 0 6.3px"></span>26.1 kbps</div>
<div style="position:absolute;left:1428.50px;top:657.62px;font-size:14.84px;line-height:17.07px;white-space:pre;color:#1b2a4e;">~0 pps<span style="display:inline-block;width:1px;height:16.6px;background:#1b2a4e;vertical-align:-3.2px;margin:0 6.2px 0 6.3px"></span>0 pps</div>
<div style="position:absolute;left:304px;top:689px;width:1228px;height:1px;background:#e2e6ef"></div>
<div style="position:absolute;left:314.10px;top:705.20px;font-size:15.3px;line-height:17.59px;white-space:pre;color:#1b2a4e;letter-spacing:0.195px;text-decoration:underline;text-underline-offset:1px;">m-gcp-3node</div>
<div style="position:absolute;left:494.50px;top:705.20px;font-size:15.3px;line-height:17.59px;white-space:pre;color:#1b2a4e;">ny8-nyc</div>
<div style="position:absolute;left:694px;top:708.8px;width:10px;height:10px;border-radius:50%;background:#00c864"></div>
<div style="position:absolute;left:711.50px;top:705.94px;font-size:14.5px;line-height:16.67px;white-space:pre;color:#1b2a4e;">Up</div>
<div style="position:absolute;left:872.50px;top:706.12px;font-size:14.3px;line-height:16.45px;white-space:pre;color:#1b2a4e;letter-spacing:-0.3px;">99.4%</div>
<div style="position:absolute;left:1050.80px;top:705.75px;font-size:14.7px;line-height:16.90px;white-space:pre;color:#1b2a4e;">79.7 ms</div>
<div style="position:absolute;left:1228.70px;top:705.62px;font-size:14.84px;line-height:17.07px;white-space:pre;color:#1b2a4e;">13.7 kbps<span style="display:inline-block;width:1px;height:16.6px;background:#1b2a4e;vertical-align:-3.2px;margin:0 6.2px 0 6.3px"></span>13.3 kbps</div>
<div style="position:absolute;left:1428.50px;top:705.62px;font-size:14.84px;line-height:17.07px;white-space:pre;color:#1b2a4e;">0.02 pps<span style="display:inline-block;width:1px;height:16.6px;background:#1b2a4e;vertical-align:-3.2px;margin:0 6.2px 0 6.3px"></span>0 pps</div>
<div style="position:absolute;left:304px;top:737px;width:1228px;height:1px;background:#e2e6ef"></div>
<div style="position:absolute;left:314.10px;top:753.20px;font-size:15.3px;line-height:17.59px;white-space:pre;color:#1b2a4e;letter-spacing:0.196px;text-decoration:underline;text-underline-offset:1px;">galactic-aws-tgw-mnc</div>
<div style="position:absolute;left:494.50px;top:753.20px;font-size:15.3px;line-height:17.59px;white-space:pre;color:#1b2a4e;">sv10-sjc</div>
<div style="position:absolute;left:694px;top:756.8px;width:10px;height:10px;border-radius:50%;background:#00c864"></div>
<div style="position:absolute;left:711.50px;top:753.94px;font-size:14.5px;line-height:16.67px;white-space:pre;color:#1b2a4e;">Up</div>
<div style="position:absolute;left:872.50px;top:754.12px;font-size:14.3px;line-height:16.45px;white-space:pre;color:#1b2a4e;letter-spacing:-0.3px;">97%</div>
<div style="position:absolute;left:1050.80px;top:753.75px;font-size:14.7px;line-height:16.90px;white-space:pre;color:#1b2a4e;">75 ms</div>
<div style="position:absolute;left:1228.70px;top:753.62px;font-size:14.84px;line-height:17.07px;white-space:pre;color:#1b2a4e;">136 kbps<span style="display:inline-block;width:1px;height:16.6px;background:#1b2a4e;vertical-align:-3.2px;margin:0 6.2px 0 6.3px"></span>32.5 kbps</div>
<div style="position:absolute;left:1428.50px;top:753.62px;font-size:14.84px;line-height:17.07px;white-space:pre;color:#1b2a4e;">~0 pps<span style="display:inline-block;width:1px;height:16.6px;background:#1b2a4e;vertical-align:-3.2px;margin:0 6.2px 0 6.3px"></span>0 pps</div>
<div style="position:absolute;left:304px;top:785px;width:1228px;height:1px;background:#e2e6ef"></div>
<div style="position:absolute;left:314.10px;top:801.20px;font-size:15.3px;line-height:17.59px;white-space:pre;color:#1b2a4e;letter-spacing:0.135px;text-decoration:underline;text-underline-offset:1px;">galactic-gcp-mnc</div>
<div style="position:absolute;left:494.50px;top:801.20px;font-size:15.3px;line-height:17.59px;white-space:pre;color:#1b2a4e;">sv10-sjc</div>
<div style="position:absolute;left:694px;top:804.8px;width:10px;height:10px;border-radius:50%;background:#00c864"></div>
<div style="position:absolute;left:711.50px;top:801.94px;font-size:14.5px;line-height:16.67px;white-space:pre;color:#1b2a4e;">Up</div>
<div style="position:absolute;left:872.50px;top:802.12px;font-size:14.3px;line-height:16.45px;white-space:pre;color:#1b2a4e;letter-spacing:-0.3px;">89.3%</div>
<div style="position:absolute;left:1050.80px;top:801.75px;font-size:14.7px;line-height:16.90px;white-space:pre;color:#1b2a4e;">150 ms</div>
<div style="position:absolute;left:1228.70px;top:801.62px;font-size:14.84px;line-height:17.07px;white-space:pre;color:#1b2a4e;">23.9 kbps<span style="display:inline-block;width:1px;height:16.6px;background:#1b2a4e;vertical-align:-3.2px;margin:0 6.2px 0 6.3px"></span>16.8 kbps</div>
<div style="position:absolute;left:1428.50px;top:801.62px;font-size:14.84px;line-height:17.07px;white-space:pre;color:#1b2a4e;">1.6 pps<span style="display:inline-block;width:1px;height:16.6px;background:#1b2a4e;vertical-align:-3.2px;margin:0 6.2px 0 6.3px"></span>0 pps</div>
<div style="position:absolute;left:304px;top:833px;width:1228px;height:1px;background:#e2e6ef"></div>
<div style="position:absolute;left:314.10px;top:849.20px;font-size:15.3px;line-height:17.59px;white-space:pre;color:#1b2a4e;letter-spacing:0.076px;text-decoration:underline;text-underline-offset:1px;">galactic-aws-mnc</div>
<div style="position:absolute;left:494.50px;top:849.20px;font-size:15.3px;line-height:17.59px;white-space:pre;color:#1b2a4e;">sv10-sjc</div>
<div style="position:absolute;left:694px;top:852.8px;width:10px;height:10px;border-radius:50%;background:#00c864"></div>
<div style="position:absolute;left:711.50px;top:849.94px;font-size:14.5px;line-height:16.67px;white-space:pre;color:#1b2a4e;">Up</div>
<div style="position:absolute;left:872.50px;top:850.12px;font-size:14.3px;line-height:16.45px;white-space:pre;color:#1b2a4e;letter-spacing:-0.3px;">89.1%</div>
<div style="position:absolute;left:1050.80px;top:849.75px;font-size:14.7px;line-height:16.90px;white-space:pre;color:#1b2a4e;">28.3 ms</div>
<div style="position:absolute;left:1228.70px;top:849.62px;font-size:14.84px;line-height:17.07px;white-space:pre;color:#1b2a4e;">40.1 kbps<span style="display:inline-block;width:1px;height:16.6px;background:#1b2a4e;vertical-align:-3.2px;margin:0 6.2px 0 6.3px"></span>27 kbps</div>
<div style="position:absolute;left:1428.50px;top:849.62px;font-size:14.84px;line-height:17.07px;white-space:pre;color:#1b2a4e;">3.6 pps<span style="display:inline-block;width:1px;height:16.6px;background:#1b2a4e;vertical-align:-3.2px;margin:0 6.2px 0 6.3px"></span>0 pps</div>
<div style="position:absolute;left:304px;top:881px;width:1228px;height:1px;background:#e2e6ef"></div>
<div style="position:absolute;left:314.10px;top:897.20px;font-size:15.3px;line-height:17.59px;white-space:pre;color:#1b2a4e;letter-spacing:0.195px;text-decoration:underline;text-underline-offset:1px;">m-gcp-3node</div>
<div style="position:absolute;left:494.50px;top:897.20px;font-size:15.3px;line-height:17.59px;white-space:pre;color:#1b2a4e;">sv10-sjc</div>
<div style="position:absolute;left:694px;top:900.8px;width:10px;height:10px;border-radius:50%;background:#00c864"></div>
<div style="position:absolute;left:711.50px;top:897.94px;font-size:14.5px;line-height:16.67px;white-space:pre;color:#1b2a4e;">Up</div>
<div style="position:absolute;left:872.50px;top:898.12px;font-size:14.3px;line-height:16.45px;white-space:pre;color:#1b2a4e;letter-spacing:-0.3px;">98.8%</div>
<div style="position:absolute;left:1050.80px;top:897.75px;font-size:14.7px;line-height:16.90px;white-space:pre;color:#1b2a4e;">11.9 ms</div>
<div style="position:absolute;left:1228.70px;top:897.62px;font-size:14.84px;line-height:17.07px;white-space:pre;color:#1b2a4e;">135 kbps<span style="display:inline-block;width:1px;height:16.6px;background:#1b2a4e;vertical-align:-3.2px;margin:0 6.2px 0 6.3px"></span>42.6 kbps</div>
<div style="position:absolute;left:1428.50px;top:897.62px;font-size:14.84px;line-height:17.07px;white-space:pre;color:#1b2a4e;">0.02 pps<span style="display:inline-block;width:1px;height:16.6px;background:#1b2a4e;vertical-align:-3.2px;margin:0 6.2px 0 6.3px"></span>0 pps</div>
<div style="position:absolute;left:304px;top:929px;width:1228px;height:1px;background:#e2e6ef"></div>
<div style="position:absolute;left:314.10px;top:945.20px;font-size:15.3px;line-height:17.59px;white-space:pre;color:#1b2a4e;letter-spacing:0.196px;text-decoration:underline;text-underline-offset:1px;">galactic-aws-tgw-mnc</div>
<div style="position:absolute;left:494.50px;top:945.20px;font-size:15.3px;line-height:17.59px;white-space:pre;color:#1b2a4e;">ny8-nyc</div>
<div style="position:absolute;left:694px;top:948.8px;width:10px;height:10px;border-radius:50%;background:#00c864"></div>
<div style="position:absolute;left:711.50px;top:945.94px;font-size:14.5px;line-height:16.67px;white-space:pre;color:#1b2a4e;">Up</div>
<div style="position:absolute;left:872.50px;top:946.12px;font-size:14.3px;line-height:16.45px;white-space:pre;color:#1b2a4e;letter-spacing:-0.3px;">98.1%</div>
<div style="position:absolute;left:1050.80px;top:945.75px;font-size:14.7px;line-height:16.90px;white-space:pre;color:#1b2a4e;">19.6 ms</div>
<div style="position:absolute;left:1228.70px;top:945.62px;font-size:14.84px;line-height:17.07px;white-space:pre;color:#1b2a4e;">40.4 kbps<span style="display:inline-block;width:1px;height:16.6px;background:#1b2a4e;vertical-align:-3.2px;margin:0 6.2px 0 6.3px"></span>27.5 kbps</div>
<div style="position:absolute;left:1428.50px;top:945.62px;font-size:14.84px;line-height:17.07px;white-space:pre;color:#1b2a4e;">~0 pps<span style="display:inline-block;width:1px;height:16.6px;background:#1b2a4e;vertical-align:-3.2px;margin:0 6.2px 0 6.3px"></span>0 pps</div>
<div style="position:absolute;left:304px;top:977px;width:1228px;height:1px;background:#e2e6ef"></div>
<div style="position:absolute;left:1533px;top:267px;width:17px;height:728px;background:#f5f6f9"></div>
<div style="position:absolute;left:1532px;top:268px;width:1px;height:710px;background:#e2e6ef"></div>
<div style="position:absolute;left:263px;top:978px;width:1269px;height:17px;background:#f5f6f9"></div>
<div style="position:absolute;left:1513px;top:769px;width:40px;height:88px;background:#fff;border-radius:6px 0 0 6px;box-shadow:-6px 0 14px rgba(0,0,0,0.12)"></div>
<div style="position:absolute;left:1513px;top:769px;width:4px;height:88px;background:#3b6ef0;border-radius:4px 0 0 4px"></div>
<svg style="position:absolute;left:1524px;top:782px" width="18" height="18" viewBox="0 0 18 18"><circle cx="9" cy="9" r="7.3" fill="none" stroke="#3b6ef0" stroke-width="1.5"/><text x="9" y="12.8" text-anchor="middle" font-family="Liberation Sans" font-weight="bold" font-size="10" fill="#3b6ef0">?</text></svg>
<div style="position:absolute;left:1517px;top:812px;width:34px;height:34px;"><div style="position:absolute;left:17px;top:17px;transform:translate(-50%,-50%) rotate(-90deg);font-size:16.5px;line-height:17px;color:#3a3a3a;white-space:pre">Help</div></div>
</body></html>
